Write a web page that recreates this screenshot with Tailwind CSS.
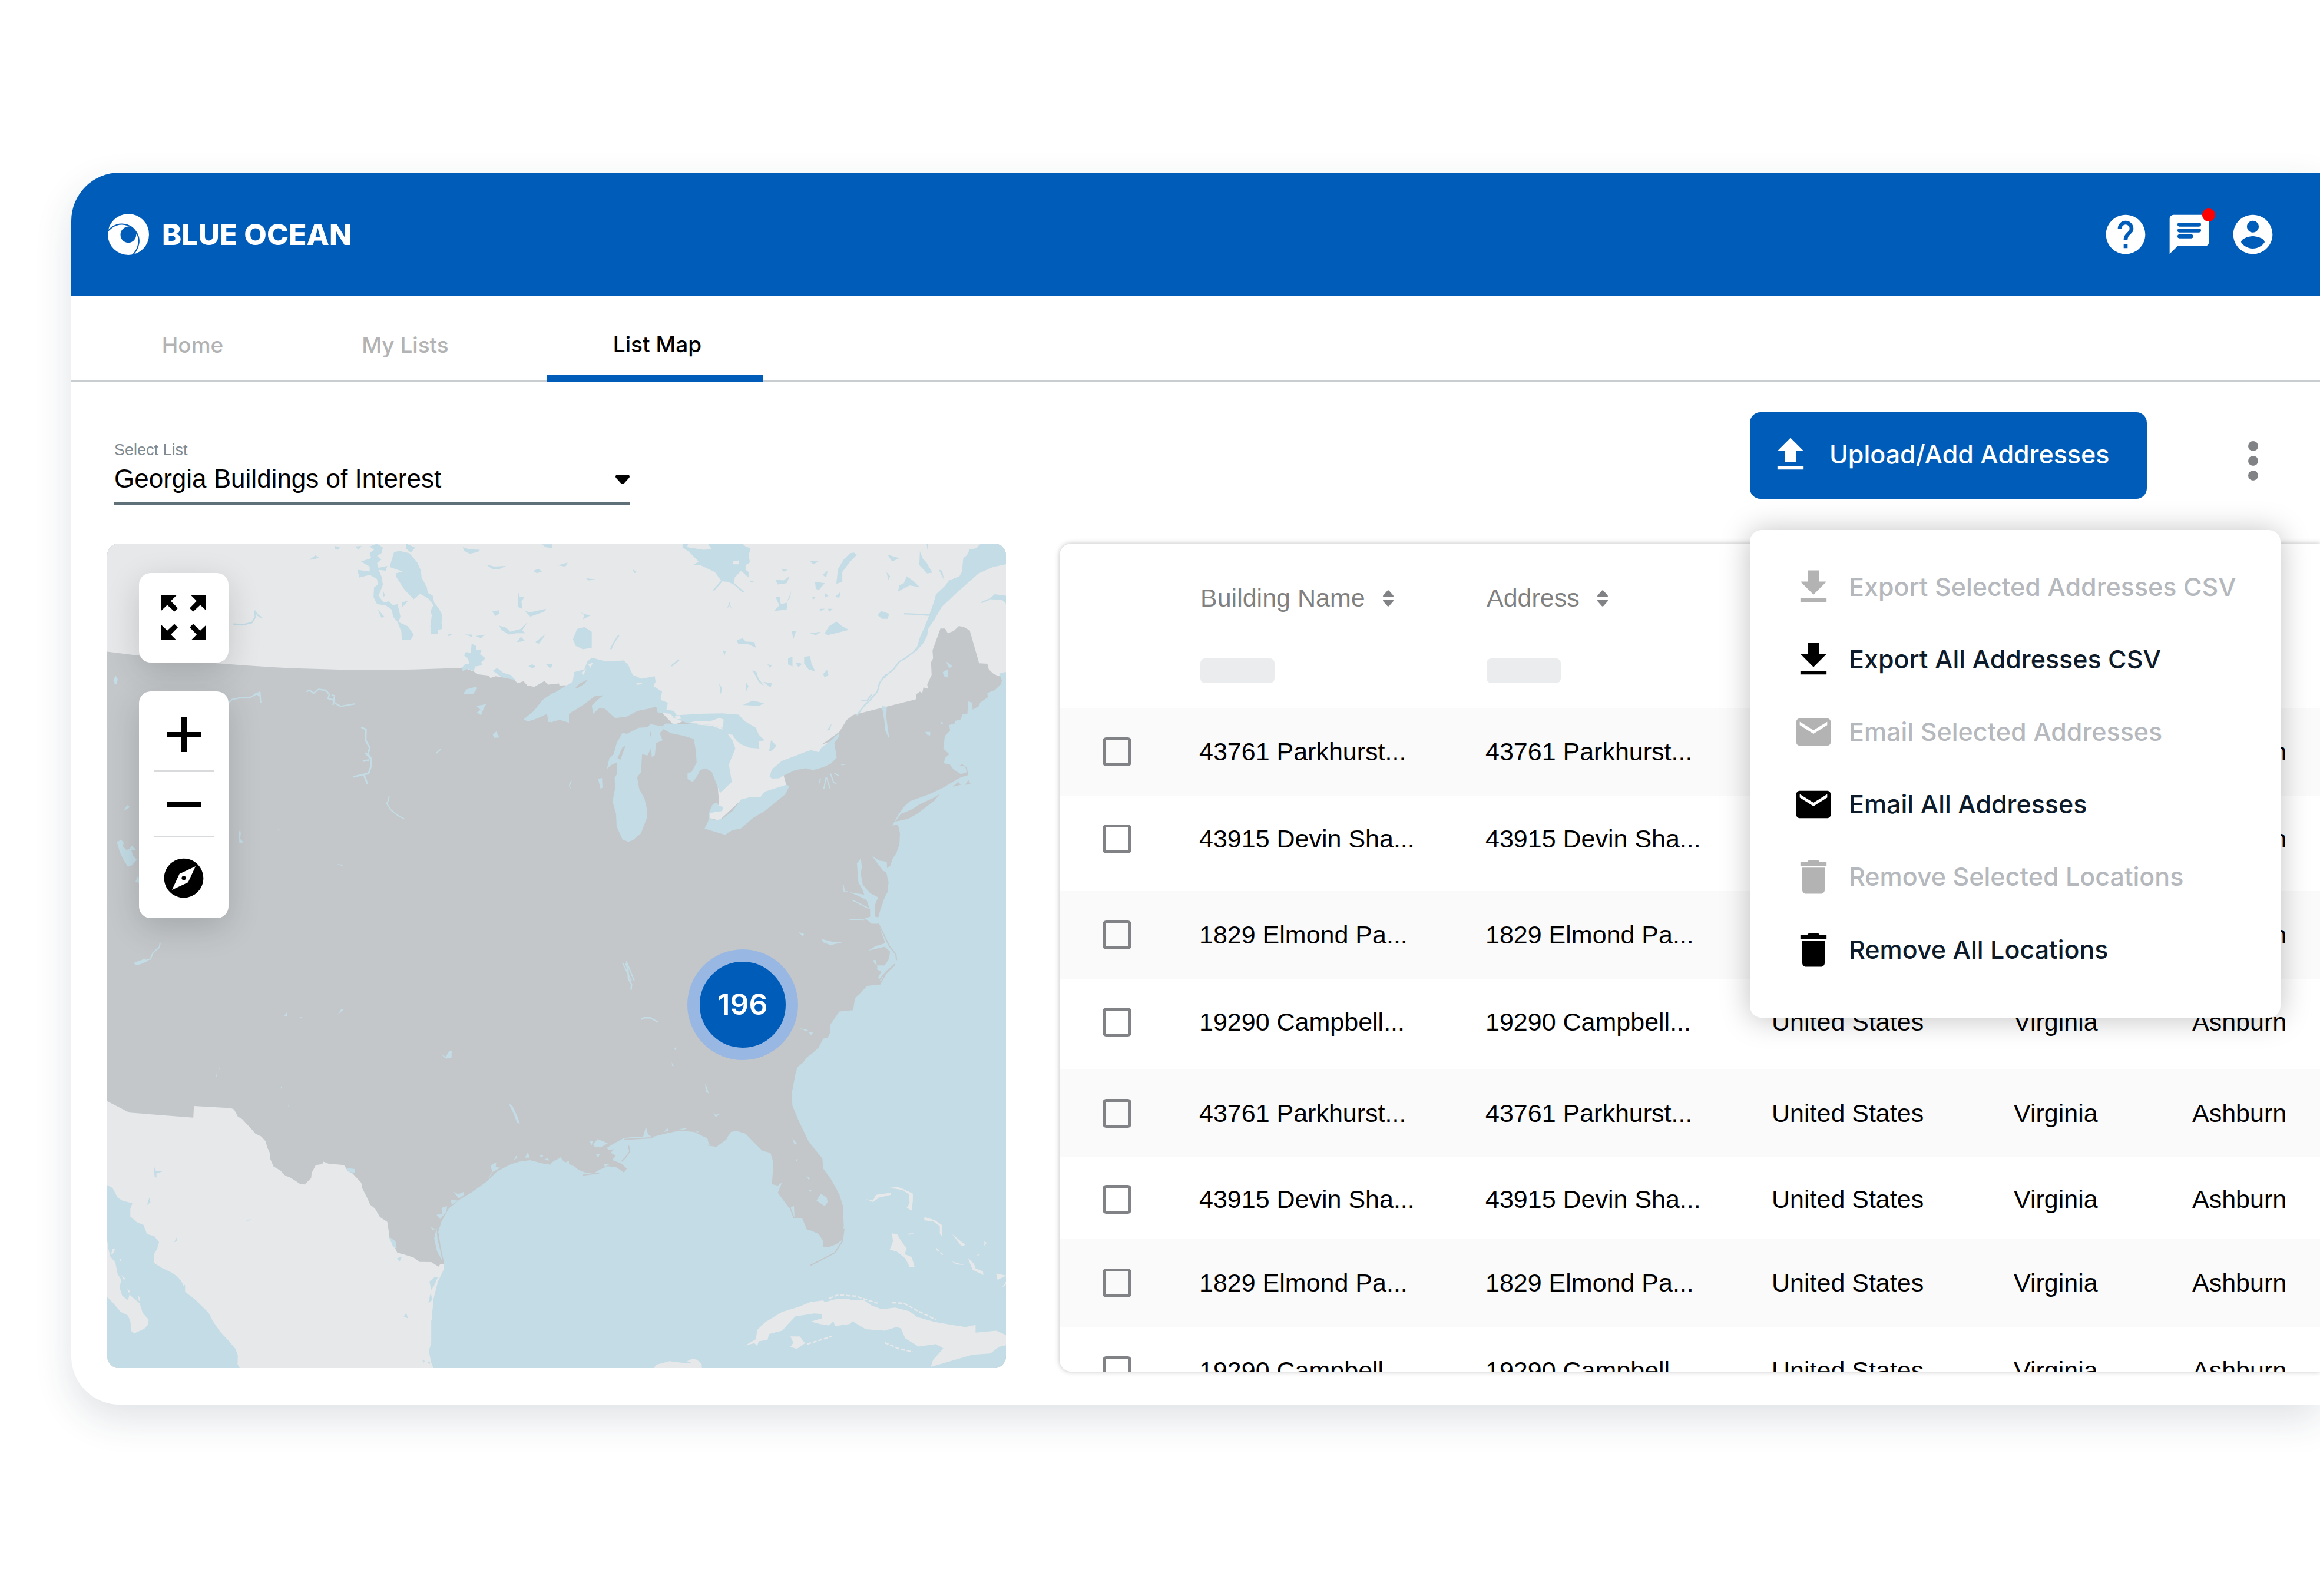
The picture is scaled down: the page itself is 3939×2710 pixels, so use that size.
<!DOCTYPE html>
<html lang="en">
<head>
  <meta charset="UTF-8" />
  <meta name="viewport" content="width=device-width, initial-scale=1.0" />
  <title>Blue Ocean - List Map</title>
  <script src="https://cdn.jsdelivr.net/npm/@tailwindcss/browser@4"></script>
</head>
<body class="bg-white font-['Inter',sans-serif] text-black overflow-x-hidden">
  <!-- Icons -->
  <svg class="hidden" aria-hidden="true">
    <symbol id="i-download" viewBox="0 0 24 24"><path d="M19 9h-4V3H9v6H5l7 7 7-7zM5 18v2h14v-2H5z"/></symbol>
    <symbol id="i-upload" viewBox="0 0 24 24"><path d="M9 16h6v-6h4l-7-7-7 7h4zm-4 2h14v2H5z"/></symbol>
    <symbol id="i-mail" viewBox="0 0 24 24"><path d="M20 4H4c-1.1 0-1.99.9-1.99 2L2 18c0 1.1.9 2 2 2h16c1.1 0 2-.9 2-2V6c0-1.1-.9-2-2-2zm0 4l-8 5-8-5V6l8 5 8-5v2z"/></symbol>
    <symbol id="i-trash" viewBox="0 0 24 24"><path d="M6 19c0 1.1.9 2 2 2h8c1.1 0 2-.9 2-2V7H6v12zM19 4h-3.5l-1-1h-5l-1 1H5v2h14V4z"/></symbol>
    <symbol id="i-sort" viewBox="0 0 20 28"><path d="M8.500 1q1.500-1.500 3 0l7 8q1.500 2.500-1.500 2.500H3Q0 11.500 1.500 9zM8.500 27q1.500 1.500 3 0l7-8q1.500-2.500-1.500-2.500H3Q0 16.500 1.500 19z"/></symbol>
  </svg>

  <div class="mt-[293px] ml-[121px] mb-20 rounded-l-[82px] bg-white shadow-[0_24px_64px_rgba(30,50,70,0.14)]">
    <header class="h-[209px] rounded-tl-[82px] bg-[#005cb9] pl-[62px] pr-[74px] flex items-center justify-between">
      <a href="#" class="flex items-center gap-[22px] text-white">
        <svg class="size-[70px]" viewBox="26 23 208 208" aria-hidden="true">
          <circle cx="130" cy="127" r="104" fill="#fff"/>
          <path d="M131 86C105 90 90 108 90 128A39.500 40 0 0 0 169 130L172 122C164 104 150 93 131 86Z" fill="#005cb9"/>
          <path d="M22 117C48 78 90 68 126 80C166 95 188 138 182 172C177 200 165 220 144 238" fill="none" stroke="#005cb9" stroke-width="6"/>
        </svg>
        <span class="font-extrabold text-[50px] leading-none">BLUE OCEAN</span>
      </a>
      <div class="flex items-center gap-7 text-white">
        <button type="button" aria-label="Help">
          <svg class="size-20" viewBox="0 0 24 24" fill="currentColor"><path d="M12 2C6.480 2 2 6.480 2 12s4.480 10 10 10 10-4.480 10-10S17.520 2 12 2zm1 17h-2v-2h2v2zm2.070-7.750l-.9.920C13.450 12.900 13 13.500 13 15h-2v-.5c0-1.100.45-2.100 1.170-2.830l1.240-1.260c.37-.36.59-.86.59-1.410 0-1.100-.9-2-2-2s-2 .9-2 2H8c0-2.210 1.790-4 4-4s4 1.790 4 4c0 .88-.36 1.680-.93 2.250z"/></svg>
        </button>
        <button type="button" aria-label="Messages" class="relative">
          <svg class="size-20" viewBox="0 0 24 24">
            <path fill="#fff" d="M20 2H4c-1.100 0-2 .9-2 2v18l4-4h14c1.100 0 2-.9 2-2V4c0-1.100-.9-2-2-2z"/>
            <path stroke="#005cb9" stroke-width="2" stroke-linecap="round" d="M7 7h10M7 10h10M7 13h6"/>
          </svg>
          <span class="absolute -right-1 -top-1 size-[22px] rounded-full bg-[#ff0000]"></span>
        </button>
        <button type="button" aria-label="Account">
          <svg class="size-20" viewBox="0 0 24 24" fill="currentColor"><path d="M12 2C6.480 2 2 6.480 2 12s4.480 10 10 10 10-4.480 10-10S17.520 2 12 2zm0 3c1.660 0 3 1.340 3 3s-1.340 3-3 3-3-1.340-3-3 1.340-3 3-3zm0 14.200c-2.500 0-4.710-1.280-6-3.220.03-1.990 4-3.080 6-3.080 1.990 0 5.970 1.090 6 3.080-1.290 1.940-3.500 3.220-6 3.220z"/></svg>
        </button>
      </div>
    </header>

    <nav class="h-[147px] border-b-4 border-[#c9cdd0] pl-6 flex text-[37px] font-medium text-[#b3b3b3]">
      <a href="#" class="w-[364px] flex items-center justify-center pt-6">Home</a>
      <a href="#" class="w-[358px] flex items-center justify-center pt-6">My Lists</a>
      <a href="#" aria-current="page" class="ml-[62px] w-[366px] -mb-1 flex items-center justify-center pt-8 pl-2 border-b-[13px] border-[#005cb9] text-black">List Map</a>
    </nav>

    <div class="h-[274px] pl-[73px] pr-[64px] flex items-start justify-between">
      <div class="pt-[99px] font-['Liberation_Sans',sans-serif]">
        <label for="list" class="block text-[27px] leading-8 text-[#7f8a91]">Select List</label>
        <div class="relative w-[875px]">
          <select id="list" class="appearance-none block w-full h-[77px] pb-3 border-b-[5px] border-[#5f7079] bg-transparent text-[44px]">
            <option>Georgia Buildings of Interest</option>
          </select>
          <svg class="absolute right-0 top-[26px] w-6 h-4 pointer-events-none" viewBox="0 0 24 16"><path d="M3 0h18q4 1 2.500 5l-9 10q-2.500 2-5 0l-9-10q-1.500-4 2.500-5z"/></svg>
        </div>
      </div>

      <div class="relative pt-[51px] flex items-start gap-[130px]">
        <button type="button" class="h-[147px] w-[674px] rounded-[18px] bg-[#005cb9] pl-[31px] pb-1 flex items-center gap-[28px] text-white text-[43px] font-medium">
          <svg class="size-[76px] fill-current" aria-hidden="true"><use href="#i-upload"/></svg>
          Upload/Add Addresses
        </button>
        <button type="button" aria-label="More actions" class="h-[165px] w-[100px] flex flex-col items-center justify-center gap-2">
          <span class="size-[17px] rounded-full bg-[#808285]"></span>
          <span class="size-[17px] rounded-full bg-[#808285]"></span>
          <span class="size-[17px] rounded-full bg-[#808285]"></span>
        </button>

        <!-- Actions menu -->
        <div class="absolute left-0 top-[251px] z-10 h-[828px] w-[901px] rounded-[20px] bg-white pt-[35px] shadow-[0_2px_50px_rgba(0,0,0,0.25)] text-[43px] font-medium text-[#0d1b2a]">
          <button type="button" disabled class="h-[123px] w-full pl-[70px] flex items-center gap-[22px] text-[#b5b8bc]">
            <svg class="size-[76px] fill-[#b3b3b3]"><use href="#i-download"/></svg>Export Selected Addresses CSV
          </button>
          <button type="button" class="h-[123px] w-full pl-[70px] flex items-center gap-[22px]">
            <svg class="size-[76px] fill-black"><use href="#i-download"/></svg>Export All Addresses CSV
          </button>
          <button type="button" disabled class="h-[123px] w-full pl-[70px] flex items-center gap-[22px] text-[#b5b8bc]">
            <svg class="size-[76px] p-[3px] fill-[#b3b3b3]"><use href="#i-mail"/></svg>Email Selected Addresses
          </button>
          <button type="button" class="h-[123px] w-full pl-[70px] flex items-center gap-[22px]">
            <svg class="size-[76px] p-[3px] fill-black"><use href="#i-mail"/></svg>Email All Addresses
          </button>
          <button type="button" disabled class="h-[123px] w-full pl-[70px] flex items-center gap-[22px] text-[#b5b8bc]">
            <svg class="size-[76px] fill-[#b3b3b3]"><use href="#i-trash"/></svg>Remove Selected Locations
          </button>
          <button type="button" class="h-[125px] w-full pl-[70px] flex items-center gap-[22px]">
            <svg class="size-[76px] fill-black"><use href="#i-trash"/></svg>Remove All Locations
          </button>
        </div>
      </div>
    </div>

    <main class="pl-[61px] pb-[62px] grid grid-cols-[1526fr_2140fr] gap-[91px] items-start">
      <!-- Map -->
      <section aria-label="Map" class="relative h-[1400px] rounded-[20px] overflow-hidden bg-[#c3c7ca]">
        <svg class="block w-full h-full" viewBox="0 0 1526 1400" preserveAspectRatio="xMidYMid slice" aria-hidden="true">
          <rect width="1526" height="1400" fill="#c3c7ca"/>

          <!-- north west -->
          <g transform="translate(-12 -13) scale(.4975 .472)" fill="#c3dce5">
            <path fill="#e6e8ea" d="M20 20L1600 20L1600 540L1568 530L1530 535L1516 522L1482 543L1458 538L1445 523L1425 530L1410 515L1350 505L1332 511L1325 502L1290 498L1275 488L1240 474Q950 490 600 473Q300 455 20 416Z"/>
            <path d="M1003 58L1022 54L1055 62L1082 95L1095 125L1097 150L1115 185L1118 205L1135 215L1140 240L1155 260L1168 285L1165 310L1167 335L1152 338L1152 352L1130 353L1127 325L1132 285L1127 270L1138 250L1120 225L1092 208L1070 228L1040 195L1012 150L1008 135L1033 128L988 112Z"/>
            <path d="M945 28L965 42L960 62L945 72L960 85L945 98L950 115L980 108L975 125L950 122L960 145L965 175L958 195L950 215L968 240L985 235L1000 250L1015 245L1025 290L1018 310L1050 325L1070 355L1060 374L1030 375L1028 345L1015 310L1000 290L995 265L975 250L945 245L933 220L935 185L948 175L945 155L920 140L885 150L878 122L920 128L920 110L890 92L925 80L920 62L935 50L920 38Z"/>
            <path d="M870 38L892 36L882 50ZM800 36L818 40L812 50L800 46ZM714 86L735 70L746 78L730 84ZM1045 28L1075 42L1060 60L1045 46ZM1238 40L1260 48L1296 50L1290 57L1262 64L1242 54ZM1317 103L1345 110L1385 108L1365 118L1340 120ZM1478 126L1495 118L1508 128L1490 134ZM1508 30L1556 30L1550 45L1520 40ZM1338 270L1362 268L1362 280L1348 288ZM1426 200L1432 220L1448 220L1438 235L1440 262L1426 255ZM1450 270L1468 275L1522 262L1515 273L1468 290ZM1362 323L1385 330L1400 345L1435 335L1460 308L1440 340L1452 350L1420 350L1395 355L1370 338ZM1422 382L1436 363L1450 378ZM1486 382L1520 353L1510 370L1497 388ZM1244 355L1270 355L1268 363ZM1282 360L1312 355L1300 368ZM1186 355L1202 353L1190 362ZM1030 240L1052 232L1030 258ZM948 265L970 290L960 295ZM965 195L972 215L965 220ZM1462 468L1475 462L1486 470L1475 477ZM1522 462L1548 462L1535 476Z"/>
            <path d="M1268 388L1282 395L1285 410L1302 410L1296 425L1315 440L1300 455L1305 465L1280 470L1275 486L1255 478L1238 486L1234 475L1245 462L1260 460L1255 440L1242 430L1248 418L1265 420ZM1340 485L1355 475L1375 492L1400 500L1417 518L1400 515L1370 508ZM1238 570L1250 552L1285 542L1286 550L1272 570ZM1284 612L1318 605L1310 618L1300 645L1286 635L1298 625ZM1340 715L1352 703L1362 725L1345 726ZM1445 660L1480 630L1510 590L1540 568L1600 548L1600 672L1570 662L1530 670L1525 640L1495 655L1460 668ZM808 1180L825 1182L830 1189Z"/>
            <path d="M45 520L53 502L60 515L58 530L50 536L48 522ZM57 1100L72 1094L80 1102L78 1118L90 1130L105 1125L112 1150L125 1165L108 1185L95 1190L80 1165L68 1140ZM100 1126L108 1114L122 1128L105 1132ZM120 1245L130 1220L134 1248ZM80 990L92 968L102 975ZM474 1065L478 1055L480 1070L478 1090L490 1102L475 1105ZM607 1055L612 1058L610 1064ZM116 1535L150 1522L165 1528L140 1540L120 1545Z"/>
            <g fill="none" stroke="#c3dce5" stroke-width="5" stroke-linejoin="round">
              <path d="M455 317L485 320L518 312L530 290L528 270L538 285L552 295"/>
              <path d="M438 602L450 588L475 583L510 582L545 562L548 600M530 565L545 575"/>
              <path d="M704 560L715 555L728 566L745 552L770 555L782 570L778 585L795 590L800 600L820 613L870 604M790 572L800 575L795 608"/>
              <path d="M891 688L907 696L906 735L920 762L914 785L924 800L924 830L916 855L900 858L864 867M905 780L922 800M898 810L918 806M900 858L912 892" stroke-width="6"/>
              <path d="M986 935L984 952L978 962L992 985L1015 1005L1038 1018M1147 782L1163 766M205 1463L202 1480L180 1500L172 1522L145 1530" stroke-width="4"/>
            </g>
          </g>

          <!-- north east -->
          <g transform="translate(758 -13) scale(.4975 .472)" fill="#c3dce5">
            <path fill="#e6e8ea" d="M-6 20L1560 20L1560 490L1518 505L1500 495L1485 480L1480 460L1452 458L1420 340L1400 328L1383 324L1365 342L1345 350L1336 333L1320 333L1293 412L1295 440L1288 455L1290 500L1275 535L1278 550L1262 545L1258 565L1250 560L1237 570L1236 588L1022 644L1000 662L975 705L850 800L785 862L795 900L700 950L640 950L565 1024L532 1015L535 995L565 965L560 900L480 650L410 680L300 560L45 537L20 538L18 530L-6 533Z"/>
            <!-- Hudson and St Lawrence -->
            <path d="M455 28L645 28L655 38L672 45L665 70L670 95L655 105L655 122L665 130L665 150L640 125L618 150L615 175L595 165L573 163L550 130L500 105L478 104L495 92L460 55L440 42L440 28Z"/>
            <path fill="#e6e8ea" d="M460 26L525 26L540 48L510 50L455 40ZM612 92L632 88L632 102L612 102Z"/>
            <path d="M1560 20L1455 30L1440 45L1420 48L1410 70L1398 80L1393 130L1385 145L1350 160L1335 180L1325 190L1305 210L1297 240L1280 290L1265 330L1250 365L1240 400L1215 430L1240 412L1262 385L1275 358L1278 335L1300 300L1325 255L1370 210L1450 135L1500 112L1560 98ZM1486 228L1505 210L1545 215L1545 245L1530 230ZM1120 512L1132 498L1140 498L1130 513Z"/>
            <path fill="none" stroke="#c3dce5" stroke-width="5" d="M1225 420L1200 440L1180 452L1160 480L1125 510L1112 530L1105 560L1080 590L1060 610L1035 645M1196 280L1240 282L1280 285M573 163L545 197M615 172L648 202M1085 570L1070 592L1050 592M1460 240L1486 228M222 358L205 385L195 408M402 468L428 445"/>
            <!-- Superior, Michigan, Huron -->
            <path d="M-10 572L40 540L65 525L70 490L105 480L115 452L130 438L180 452L240 448L255 465L270 500L300 514L345 505L348 525L340 540L370 560L365 590L390 600L385 625L410 630L420 645L500 640L575 638L632 643L650 665L690 690L700 715L720 735L700 740L702 765L670 762L640 750L625 738L610 715L580 712L575 690L540 680L460 675L410 655L400 640L355 635L350 613L330 620L285 630L250 650L210 655L175 622L155 620L135 640L130 610L150 590L170 573L140 577L105 605L80 622L45 645L-10 672Z"/>
            <path d="M235 708L250 712L290 690L320 688L330 677L370 685L382 675L470 677L540 683L585 700L610 735L620 765L598 822L608 885L568 925L555 890L540 850L520 836L500 842L492 860L475 885L457 875L457 852L470 850L488 815L485 770L478 730L440 718L400 710L375 695L362 710L372 735L350 745L345 790L335 795L332 765L320 790L302 785L298 850L285 868L292 910L310 945L319 985L318 1015L298 1070L270 1095L255 1100L235 1092L215 1045L213 1000L201 955L210 905L208 870L217 855L215 815L195 825L182 838L190 800L205 785L215 745Z"/>
            <path fill="#c3c7ca" d="M218 800L235 760L245 755L228 805ZM330 703L334 720L328 722ZM75 545L90 530L118 516L105 532L80 548Z"/>
            <path fill="#e6e8ea" d="M412 650L430 645L435 658L420 660ZM460 672L490 665L530 668L565 655L580 660L578 690L540 680ZM280 532L295 527L303 532L285 536ZM95 492L112 478L100 502ZM118 462L135 455L125 475Z"/>
            <!-- St Clair, Erie, Ontario -->
            <path d="M543 965L558 958L562 970L578 975L575 990L550 993L533 998L535 1018L555 1022L575 1018L610 990L640 948L670 940L705 940L720 920L795 895L805 900L790 930L720 990L680 1015L638 1053L610 1058L585 1075L515 1053L530 1020L530 995Z"/>
            <path d="M737 866L745 840L778 810L815 795L865 775L910 760L940 742L975 708L975 720L958 745L966 798L945 820L920 832L885 842L860 836L825 842L785 862L770 872L745 873ZM735 775L742 735L760 755L745 772Z"/>
            <path fill="#e6e8ea" d="M870 768L910 752L940 742L915 760L905 778Z"/>
            <!-- Canadian lakes -->
            <path d="M66 372L80 335L105 328L130 345L130 402L100 408L75 395ZM1106 285L1118 270L1145 280L1140 298L1120 298ZM15 106L48 96L40 110ZM110 152L145 157L120 160ZM270 120L284 130L275 134ZM88 272L105 282L128 285L100 300L105 285ZM592 262L600 238L607 262L600 250ZM625 375L645 368L655 380L685 382L690 402L665 390L630 388ZM646 608L680 592L718 602L700 612ZM678 482L692 490L700 515L720 542L700 525ZM715 525L745 530L740 545ZM565 530L575 550L570 570ZM655 525L665 540L658 558ZM730 462L745 465L738 475ZM578 412L587 415L583 432ZM875 90L905 92L885 102ZM778 120L800 122L785 128ZM757 158L785 160L805 145L795 170L765 175ZM757 218L772 220L775 245L798 240L795 265L752 270L770 250ZM812 198L805 225L797 235ZM670 160L690 168L672 166ZM1025 60L1035 68L1010 95L985 130L985 165L965 172L970 120L990 85L1012 62ZM918 140L935 125L930 150ZM892 165L925 170L905 195L895 190ZM960 220L980 200L975 222ZM925 205L938 215L925 222ZM880 222L895 218L888 228ZM908 262L925 262L912 270ZM935 262L952 262L942 272ZM925 350L940 325L965 308L985 325L1008 338L970 348L935 357ZM875 350L912 345L895 357ZM813 342L827 342L818 372ZM800 440L815 435L815 470L800 462ZM825 455L848 460L835 472ZM855 435L875 432L880 460L893 488L870 480L855 460ZM920 497L933 482L938 500L925 510ZM932 700L950 673L942 698ZM1140 68L1180 80L1155 92ZM1250 55L1260 82L1272 95L1292 132L1275 135L1248 105ZM1136 130L1148 145L1142 158ZM1175 200L1180 178L1195 170L1205 145L1225 160L1250 185L1215 178ZM1273 28L1278 28L1276 50ZM1315 122L1326 125L1332 158Z"/>
            <!-- US lakes -->
            <path d="M1120 612L1137 615L1135 650L1140 690L1146 732L1132 700L1128 660ZM1268 705L1285 705L1285 718L1275 715ZM1328 490L1345 480L1346 510L1332 505ZM1338 450L1362 470L1350 475ZM976 820L1004 821L985 825ZM152 875L165 870L167 905L160 910ZM55 885L62 880L55 900L60 912L52 900ZM1320 668L1330 672L1325 680ZM835 1424L855 1432L850 1440ZM915 1450L950 1460L995 1460L945 1472L920 1462Z"/>
            <path fill="none" stroke="#c3dce5" stroke-width="4" d="M910 872L908 890M930 868L922 910M932 870L943 908M945 855L955 885L965 893M958 853L973 863M235 1535L265 1600M248 1530L275 1600M988 1255L992 1280L1004 1280M1020 1310L1075 1340M1010 1380L1060 1382"/>
            <!-- Atlantic -->
            <path d="M1560 492L1540 490L1520 495L1530 520L1525 535L1505 555L1480 565L1482 580L1455 600L1452 612L1430 625L1428 600L1415 595L1412 640L1395 640L1390 660L1370 665L1368 675L1350 680L1353 700L1335 720L1330 765L1350 785L1335 800L1332 818L1352 822L1365 840L1390 857L1410 850L1405 830L1385 825L1395 822L1410 832L1415 860L1390 868L1370 880L1330 905L1310 915L1280 930L1240 945L1215 955L1195 975L1178 1000L1165 1025L1155 1042L1175 1038L1182 1070L1180 1110L1170 1140L1155 1165L1150 1185L1138 1195L1137 1172L1112 1168L1087 1152L1110 1185L1125 1205L1135 1210L1143 1245L1140 1280L1130 1300L1115 1345L1108 1372L1098 1370L1096 1330L1107 1300L1080 1285L1055 1255L1048 1215L1052 1190L1048 1160L1035 1178L1040 1245L1055 1275L1060 1290L1010 1282L1040 1295L1068 1310L1080 1345L1080 1370L1062 1375L1085 1395L1108 1395L1120 1430L1132 1465L1100 1475L1073 1492L1130 1478L1148 1495L1145 1520L1130 1545L1070 1545L1105 1552L1100 1600L1560 1600Z"/>
            <path fill="#c3c7ca" d="M1165 1028L1185 1000L1220 985L1250 965L1300 940L1318 928L1300 952L1240 1000L1210 1018ZM1362 902L1380 885L1390 895ZM1405 895L1415 878L1423 893Z"/>
            <path fill="none" stroke="#c3c7ca" stroke-width="4" d="M1108 1395L1125 1430L1145 1475L1168 1505L1171 1535L1135 1568L1110 1600"/>
          </g>

          <!-- south west -->
          <g transform="translate(-12 717) scale(.4975 .4847)" fill="#c3dce5">
            <path fill="#e6e8ea" d="M20 472L100 514L318 532L320 491L445 498L457 503L470 528L485 537L515 570L530 588L550 598L565 615L570 635L579 655L580 675L592 703L615 717L632 735L648 741L665 752L682 764L698 766L720 744L722 725L736 698L758 695L762 686L780 693L832 698L845 718L862 728L891 760L895 780L910 810L922 837L938 850L955 880L980 897L985 930L988 955L1005 985L1014 1005L1040 1012L1070 1022L1090 1037L1130 1038L1155 1054L1160 1046L1173 1044L1190 1060L1190 1420L20 1420Z"/>
            <path d="M1600 683L1568 698L1540 697L1510 692L1467 681L1430 686L1400 696L1355 720L1320 755L1270 792L1225 820L1190 850L1165 895L1153 935L1160 985L1173 1040L1172 1065L1150 1112L1138 1165L1130 1240L1130 1320L1122 1350L1130 1390L1142 1420L1600 1420Z"/>
            <path d="M20 766L42 778L60 812L75 822L110 832L103 850L103 878L125 898L148 908L160 940L185 947L201 968L195 990L183 1012L183 1040L210 1058L245 1075L265 1090L290 1120L290 1142L325 1170L370 1215L385 1245L410 1282L440 1315L462 1342L470 1365L469 1395L482 1420L20 1420L20 1156L45 1182L70 1212L95 1225L103 1245L107 1280L116 1288L150 1272L163 1258L166 1240L145 1215L135 1182L115 1165L100 1152L95 1172L75 1155L66 1125L73 1100L60 1080L52 1040L35 1018L28 990L20 930Z"/>
            <path fill="#e6e8ea" d="M38 1010L42 992L52 990L44 1008ZM72 1082L85 1095L82 1103ZM92 1130L102 1140L98 1146ZM130 1152L138 1172L132 1174ZM275 1100L292 1112L285 1122ZM67 1025L72 1030L69 1036Z"/>
            <path d="M1332 700L1352 688L1350 705L1366 707L1340 722L1322 750L1338 720ZM1412 680L1420 665L1424 672ZM1450 672L1460 652L1466 672ZM1495 662L1512 665L1508 672ZM1515 680L1528 672L1532 682ZM1555 682L1572 670L1580 685ZM1205 790L1222 800L1240 792L1242 802L1224 815ZM1197 820L1222 822L1200 836ZM1165 848L1184 842L1182 862L1160 887L1148 872L1168 868ZM1148 918L1152 965L1168 1010L1166 1030L1150 1000L1140 955ZM1128 915L1146 922L1135 925ZM1124 1106L1142 1090L1152 1092L1140 1120L1130 1135ZM1128 1145L1134 1170L1120 1182ZM1036 1228L1045 1216L1050 1235ZM1013 1025L1030 1018L1022 1036ZM986 948L1008 965L1012 990L1000 985ZM840 708L870 712L868 725L848 722ZM183 700L190 718L213 720L192 728L192 742L186 738ZM160 838L168 812L172 828ZM253 968L262 950L262 964ZM492 890L517 888L505 893ZM1165 312L1180 318L1190 300L1200 297L1199 322L1180 325ZM1394 481L1408 492L1418 515L1425 530L1433 555L1422 548L1412 520ZM628 176L638 162L637 178ZM680 180L692 180L684 184ZM810 172L822 153L832 152ZM615 430L620 418L620 428ZM641 485L648 495L643 494ZM405 350L408 362L404 366ZM396 374L398 388L394 388ZM1100 1382L1108 1384L1104 1390ZM1117 1388L1126 1386L1124 1396Z"/>
            <path fill="none" stroke="#e6e8ea" stroke-width="3" d="M1150 1112L1136 1165L1130 1240"/>
            <path fill="none" stroke="#c3c7ca" stroke-width="4" d="M1153 935L1160 985L1172 1040"/>
          </g>

          <!-- south east -->
          <g transform="translate(758 717) scale(.4975 .4847)" fill="#c3dce5">
            <path d="M-10 692L0 684L22 674L42 690L70 702L85 715L108 724L135 728L155 715L185 702L215 706L240 724L250 710L230 692L200 680L212 665L195 655L205 642L190 645L180 638L210 620L240 603L270 600L305 600L315 563L322 590L335 600L380 588L430 577L480 582L525 605L530 625L555 632L590 605L605 582L625 578L655 588L680 615L712 648L740 655L750 690L745 765L765 770L780 758L765 795L805 850L820 840L822 882L848 884L865 925L880 928L905 940L920 965L918 985L940 985L965 975L985 960L990 910L987 840L975 800L945 745L920 710L917 675L870 615L835 540L815 490L812 450L825 380L832 355L850 340L865 320L885 305L905 285L920 255L935 252L943 235L945 205L975 160L1022 155L1028 115L1070 70L1112 65L1130 30L1165 0L1165 -20L1100 -20L1105 15L1090 -20L1560 -20L1560 1420L-10 1420Z"/>
            <path fill="#c3c7ca" d="M1080 -20L1105 0L1102 12L1118 20L1108 40L1115 60L1070 70L1030 60Z"/>
            <path fill="none" stroke="#c3c7ca" stroke-width="4" d="M1112 66L1135 25L1165 -5M875 1050L910 1032L960 1005L985 965L991 920M808 850L820 882L832 882M255 628L260 650L245 672L232 685M240 608L340 602M100 733L155 726M527 628L555 632L590 605M897 660L905 695"/>
            <path d="M135 625L150 607L170 615L185 622L160 636L140 634ZM122 615L134 613L130 628ZM144 662L158 658L152 672ZM172 695L190 696L175 705ZM897 822L912 798L932 812L935 828L925 842L905 828ZM815 604L830 622L822 627ZM825 678L835 678L830 685ZM862 735L875 745L870 749ZM870 785L880 786L876 794ZM838 218L868 225L865 230ZM870 232L885 232L880 244ZM517 412L523 425L529 447L519 440ZM545 515L553 522L568 518L553 530ZM412 290L422 284L415 296ZM403 338L410 352L404 350ZM428 572L458 568L445 574ZM485 580L495 580L492 584ZM377 582L388 568L392 577Z"/>
            <path fill="none" stroke="#c3dce5" stroke-width="5" d="M299 187L308 182L330 182L356 197M246 -10L254 15L255 45L266 65L264 84"/>
            <!-- Cuba, Yucatan, Bahamas -->
            <g fill="#e6e8ea">
              <path d="M653 1330L690 1308L695 1275L722 1248L780 1212L835 1195L875 1178L920 1172L925 1178L960 1168L995 1165L1025 1172L1060 1172L1085 1190L1120 1203L1165 1197L1215 1210L1240 1230L1300 1247L1360 1258L1405 1265L1440 1258L1440 1285L1510 1278L1560 1300L1560 1325L1520 1335L1490 1358L1430 1362L1330 1392L1287 1405L1295 1380L1330 1340L1305 1325L1245 1334L1200 1305L1185 1270L1170 1265L1130 1278L1065 1273L1020 1245L1010 1255L960 1262L955 1245L940 1260L910 1255L878 1246L915 1235L915 1220L890 1218L825 1228L800 1255L780 1278L735 1290L730 1310L700 1315L695 1332L685 1322Z"/>
              <path d="M808 1298L840 1298L858 1322L830 1342L808 1335L818 1320ZM335 1420L350 1397L395 1385L435 1390L475 1392L455 1385L475 1376L490 1380L505 1395L507 1420ZM1155 937L1172 940L1190 970L1205 990L1198 1010L1222 1020L1232 1055L1215 1055L1200 1025L1170 1000L1147 995L1158 965ZM1066 817L1090 822L1100 802L1150 795L1152 802L1110 812L1090 828ZM1145 778L1175 774L1200 785L1226 798L1226 822L1222 857L1205 848L1215 830L1212 800L1190 785ZM1265 880L1300 890L1325 908L1327 948L1318 940L1318 912L1295 895L1265 892ZM1360 940L1405 978L1392 982ZM1358 1035L1402 1048L1375 1046ZM1413 1022L1435 1045L1440 1060L1465 1070L1467 1083L1430 1065ZM1470 965L1478 970L1470 982ZM1510 1078L1545 1085L1515 1100ZM1528 1130L1545 1105L1545 1115ZM1210 938L1232 936L1212 943ZM1443 1013L1458 1010L1448 1015Z"/>
              <path fill="none" stroke="#e6e8ea" stroke-width="5" stroke-dasharray="14 6" d="M940 1165L970 1153L1030 1157L1105 1182M1155 1180L1195 1182L1245 1210L1305 1240M1130 1320L1180 1342L1225 1352M1305 990L1328 1012M865 1325L950 1298"/>
            </g>
          </g>
        </svg>

        <div class="absolute left-[54px] top-[50px] w-[152px] flex flex-col gap-[49px]">
          <button type="button" aria-label="Full screen" class="size-[152px] rounded-[20px] bg-white shadow-[0_16px_56px_rgba(0,0,0,0.16)] flex items-center justify-center">
            <svg class="size-[76px]" viewBox="0 0 152 160" preserveAspectRatio="none">
              <path id="arr" d="M0 0H51L32 20L56 46L44 58L20 34L0 54Z"/>
              <use href="#arr" transform="translate(152) scale(-1 1)"/>
              <use href="#arr" transform="translate(0 160) scale(1 -1)"/>
              <use href="#arr" transform="translate(152 160) scale(-1 -1)"/>
            </svg>
          </button>
          <div class="h-[385px] rounded-[20px] bg-white shadow-[0_16px_56px_rgba(0,0,0,0.16)] px-[25px] pt-3 flex flex-col">
            <button type="button" aria-label="Zoom in" class="h-[125px] border-b-3 border-[#d9dadb] flex items-center justify-center">
              <svg class="size-[59px]" viewBox="0 0 59 59"><path d="M25 0h9v25h25v9H34v25h-9V34H0v-9h25z"/></svg>
            </button>
            <button type="button" aria-label="Zoom out" class="h-[111px] border-b-3 border-[#d9dadb] flex items-center justify-center">
              <svg class="size-[59px]" viewBox="0 0 59 59"><path d="M0 25h59v9H0z"/></svg>
            </button>
            <button type="button" aria-label="Compass" class="grow flex items-center justify-center">
              <svg class="size-20" viewBox="0 0 24 24"><path d="M12 10.900c-.61 0-1.100.49-1.100 1.100s.49 1.100 1.100 1.100c.61 0 1.100-.49 1.100-1.100s-.49-1.100-1.100-1.100zM12 2C6.480 2 2 6.480 2 12s4.480 10 10 10 10-4.480 10-10S17.520 2 12 2zm2.190 12.190L6 18l3.810-8.190L18 6l-3.810 8.190z"/></svg>
            </button>
          </div>
        </div>

        <!-- Cluster pin -->
        <button type="button" class="absolute left-[70.7%] top-[55.9%] -translate-x-1/2 -translate-y-1/2 size-[188px] rounded-full border-[21px] border-[#99b7e3] bg-[#005cb9] text-white text-[50px] font-semibold">196</button>
      </section>

      <!-- Addresses -->
      <section aria-label="Addresses" class="h-[1406px] -mb-1.5 rounded-l-[20px] overflow-hidden shadow-[0_0_8px_rgba(0,0,0,0.25)]">
        <table class="w-full table-fixed text-left text-[43px] font-['Liberation_Sans',sans-serif]">
          <colgroup>
            <col class="w-[237px]" />
            <col class="w-[486px]" />
            <col class="w-[486px]" />
            <col class="w-[411px]" />
            <col class="w-[303px]" />
            <col />
          </colgroup>
          <thead class="text-[#808080]">
            <tr class="h-[279px] align-top">
              <td></td>
              <th scope="col" class="font-normal pt-[60px] pl-0.5">
                <div class="h-[65px] flex items-center gap-[29px]">Building Name <svg class="w-5 h-7 fill-[#808285]"><use href="#i-sort"/></svg></div>
                <div class="mt-[70px] w-[126px] h-[42px] rounded-lg bg-[#ebecee]"></div>
              </th>
              <th scope="col" class="font-normal pt-[60px] pl-0.5">
                <div class="h-[65px] flex items-center gap-[29px]">Address <svg class="w-5 h-7 fill-[#808285]"><use href="#i-sort"/></svg></div>
                <div class="mt-[70px] w-[126px] h-[42px] rounded-lg bg-[#ebecee]"></div>
              </th>
              <td></td>
              <td></td>
              <td></td>
            </tr>
          </thead>
          <tbody>
            <tr class="h-[149px] bg-[#fafafa]">
              <td class="pl-[73px]"><input type="checkbox" aria-label="Select row 1" class="block appearance-none size-[49px] rounded-[6px] border-5 border-[#808285]" /></td>
              <td>43761 Parkhurst...</td><td>43761 Parkhurst...</td><td>United States</td><td>Virginia</td><td>Ashburn</td>
            </tr>
            <tr class="h-[162px] *:pb-4">
              <td class="pl-[73px]"><input type="checkbox" aria-label="Select row 2" class="block appearance-none size-[49px] rounded-[6px] border-5 border-[#808285]" /></td>
              <td>43915 Devin Sha...</td><td>43915 Devin Sha...</td><td>United States</td><td>Virginia</td><td>Ashburn</td>
            </tr>
            <tr class="h-[149px] bg-[#fafafa]">
              <td class="pl-[73px]"><input type="checkbox" aria-label="Select row 3" class="block appearance-none size-[49px] rounded-[6px] border-5 border-[#808285]" /></td>
              <td>1829 Elmond Pa...</td><td>1829 Elmond Pa...</td><td>United States</td><td>Virginia</td><td>Ashburn</td>
            </tr>
            <tr class="h-[154px] *:pb-2">
              <td class="pl-[73px]"><input type="checkbox" aria-label="Select row 4" class="block appearance-none size-[49px] rounded-[6px] border-5 border-[#808285]" /></td>
              <td>19290 Campbell...</td><td>19290 Campbell...</td><td>United States</td><td>Virginia</td><td>Ashburn</td>
            </tr>
            <tr class="h-[149px] bg-[#fafafa]">
              <td class="pl-[73px]"><input type="checkbox" aria-label="Select row 5" class="block appearance-none size-[49px] rounded-[6px] border-5 border-[#808285]" /></td>
              <td>43761 Parkhurst...</td><td>43761 Parkhurst...</td><td>United States</td><td>Virginia</td><td>Ashburn</td>
            </tr>
            <tr class="h-[139px] *:pt-1">
              <td class="pl-[73px]"><input type="checkbox" aria-label="Select row 6" class="block appearance-none size-[49px] rounded-[6px] border-5 border-[#808285]" /></td>
              <td>43915 Devin Sha...</td><td>43915 Devin Sha...</td><td>United States</td><td>Virginia</td><td>Ashburn</td>
            </tr>
            <tr class="h-[149px] bg-[#fafafa]">
              <td class="pl-[73px]"><input type="checkbox" aria-label="Select row 7" class="block appearance-none size-[49px] rounded-[6px] border-5 border-[#808285]" /></td>
              <td>1829 Elmond Pa...</td><td>1829 Elmond Pa...</td><td>United States</td><td>Virginia</td><td>Ashburn</td>
            </tr>
            <tr class="h-[149px]">
              <td class="pl-[73px]"><input type="checkbox" aria-label="Select row 8" class="block appearance-none size-[49px] rounded-[6px] border-5 border-[#808285]" /></td>
              <td>19290 Campbell...</td><td>19290 Campbell...</td><td>United States</td><td>Virginia</td><td>Ashburn</td>
            </tr>
          </tbody>
        </table>
      </section>
    </main>
  </div>
</body>
</html>
